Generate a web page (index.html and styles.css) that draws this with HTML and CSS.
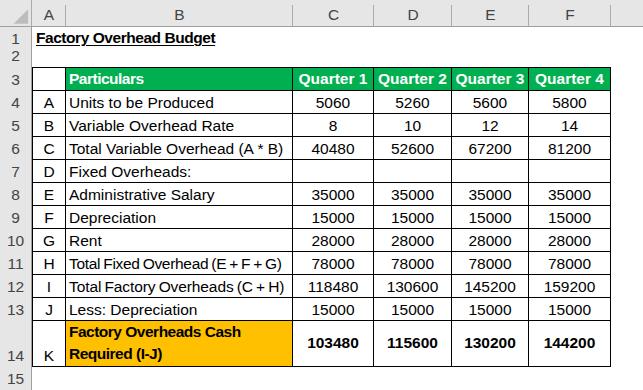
FILE: index.html
```html
<!DOCTYPE html>
<html lang="en">
<head>
<meta charset="utf-8">
<title>Factory Overhead Budget</title>
<link rel="stylesheet" href="styles.css">
</head>
<body>
<div class="sheet">
  <div class="corner"><svg width="32" height="26" viewBox="0 0 32 26"><polygon points="14,24 29,24 29,9" fill="#bdbdbd"/></svg></div>
  <div class="ch">A</div><div class="ch">B</div><div class="ch">C</div><div class="ch">D</div><div class="ch">E</div><div class="ch">F</div><div class="ch last"></div>

  <div class="rh">1</div><div class="wide title-cell"><span class="title">Factory Overhead Budget</span></div>
  <div class="rh">2</div><div class="wide"></div>

  <div class="rh">3</div><div class="c a top"></div><div class="c g top tight">Particulars</div><div class="c num g top">Quarter 1</div><div class="c num g top">Quarter 2</div><div class="c num g top">Quarter 3</div><div class="c num g top">Quarter 4</div><div class="e"></div>

  <div class="rh">4</div><div class="c a">A</div><div class="c">Units to be Produced</div><div class="c num">5060</div><div class="c num">5260</div><div class="c num">5600</div><div class="c num">5800</div><div class="e"></div>

  <div class="rh">5</div><div class="c a">B</div><div class="c">Variable Overhead Rate</div><div class="c num">8</div><div class="c num">10</div><div class="c num">12</div><div class="c num">14</div><div class="e"></div>

  <div class="rh">6</div><div class="c a">C</div><div class="c">Total Variable Overhead (A * B)</div><div class="c num">40480</div><div class="c num">52600</div><div class="c num">67200</div><div class="c num">81200</div><div class="e"></div>

  <div class="rh">7</div><div class="c a">D</div><div class="c">Fixed Overheads:</div><div class="c num"></div><div class="c num"></div><div class="c num"></div><div class="c num"></div><div class="e"></div>

  <div class="rh">8</div><div class="c a">E</div><div class="c">Administrative Salary</div><div class="c num">35000</div><div class="c num">35000</div><div class="c num">35000</div><div class="c num">35000</div><div class="e"></div>

  <div class="rh">9</div><div class="c a">F</div><div class="c">Depreciation</div><div class="c num">15000</div><div class="c num">15000</div><div class="c num">15000</div><div class="c num">15000</div><div class="e"></div>

  <div class="rh">10</div><div class="c a">G</div><div class="c">Rent</div><div class="c num">28000</div><div class="c num">28000</div><div class="c num">28000</div><div class="c num">28000</div><div class="e"></div>

  <div class="rh">11</div><div class="c a">H</div><div class="c squeeze-lg">Total Fixed Overhead (E + F + G)</div><div class="c num">78000</div><div class="c num">78000</div><div class="c num">78000</div><div class="c num">78000</div><div class="e"></div>

  <div class="rh">12</div><div class="c a">I</div><div class="c squeeze-sm">Total Factory Overheads (C + H)</div><div class="c num">118480</div><div class="c num">130600</div><div class="c num">145200</div><div class="c num">159200</div><div class="e"></div>

  <div class="rh">13</div><div class="c a">J</div><div class="c">Less: Depreciation</div><div class="c num">15000</div><div class="c num">15000</div><div class="c num">15000</div><div class="c num">15000</div><div class="e"></div>

  <div class="rh">14</div><div class="c a">K</div><div class="c o b tight wrap">Factory Overheads Cash Required (I-J)</div><div class="c num b mid">103480</div><div class="c num b mid">115600</div><div class="c num b mid">130200</div><div class="c num b mid">144200</div><div class="e"></div>

  <div class="rh">15</div><div class="wide"></div>
</div>
</body>
</html>
```
FILE: styles.css
```css
body {
  margin: 0;
  background: #fff;
}

.sheet {
  display: grid;
  grid-template-columns: 32px 34px 227px 81px 78px 77px 82px 1fr;
  grid-template-rows: 27px 23px 17px 24px repeat(10, 23px) 46px 1fr;
  width: 643px;
  height: 390px;
  overflow: hidden;
  font-family: "Liberation Sans", Arial, sans-serif;
  font-size: 15.5px;
  line-height: 18px;
  color: #000;
  background: #fff;
}

.sheet > div {
  display: flex;
  align-items: flex-end;
  white-space: nowrap;
  min-width: 0;
  box-sizing: border-box;
}

.corner {
  background: #e6e6e6;
  border-right: 1px solid #ababab;
  border-bottom: 1px solid #9f9f9f;
}

.corner svg {
  display: block;
}

.ch {
  justify-content: center;
  padding-bottom: 2px;
  color: #444;
  background: #e6e6e6 linear-gradient(#ababab, #ababab) no-repeat right bottom / 1px 21px;
  border-bottom: 1px solid #9f9f9f;
}

.ch.last {
  background: #e6e6e6;
}

.rh {
  justify-content: center;
  padding-bottom: 2px;
  color: #444;
  background: #e6e6e6;
  border-right: 1px solid #9f9f9f;
}

.wide {
  grid-column: span 7;
}

.title-cell {
  padding: 0 4px 3px;
}

.title {
  font-weight: bold;
  text-decoration: underline;
  text-decoration-thickness: 1px;
  text-underline-offset: 2px;
  letter-spacing: -0.45px;
}

.c {
  padding: 0 3px 1px;
  border-right: 1px solid #000;
  border-bottom: 1px solid #000;
}

.c.a {
  justify-content: center;
  border-left: 1px solid #000;
}

.c.top {
  border-top: 1px solid #000;
  padding-bottom: 2px;
}

.num {
  justify-content: center;
}

.g {
  background: #00b050;
  color: #fff;
  font-weight: bold;
}

.o {
  background: #ffc000;
}

.b {
  font-weight: bold;
}

.tight {
  letter-spacing: -0.5px;
}

.squeeze-lg {
  word-spacing: -1px;
  letter-spacing: -0.3px;
}

.squeeze-sm {
  word-spacing: -1px;
  letter-spacing: -0.1px;
}

.wrap {
  white-space: normal !important;
  line-height: 22px;
}

.mid {
  align-items: center !important;
}
```
